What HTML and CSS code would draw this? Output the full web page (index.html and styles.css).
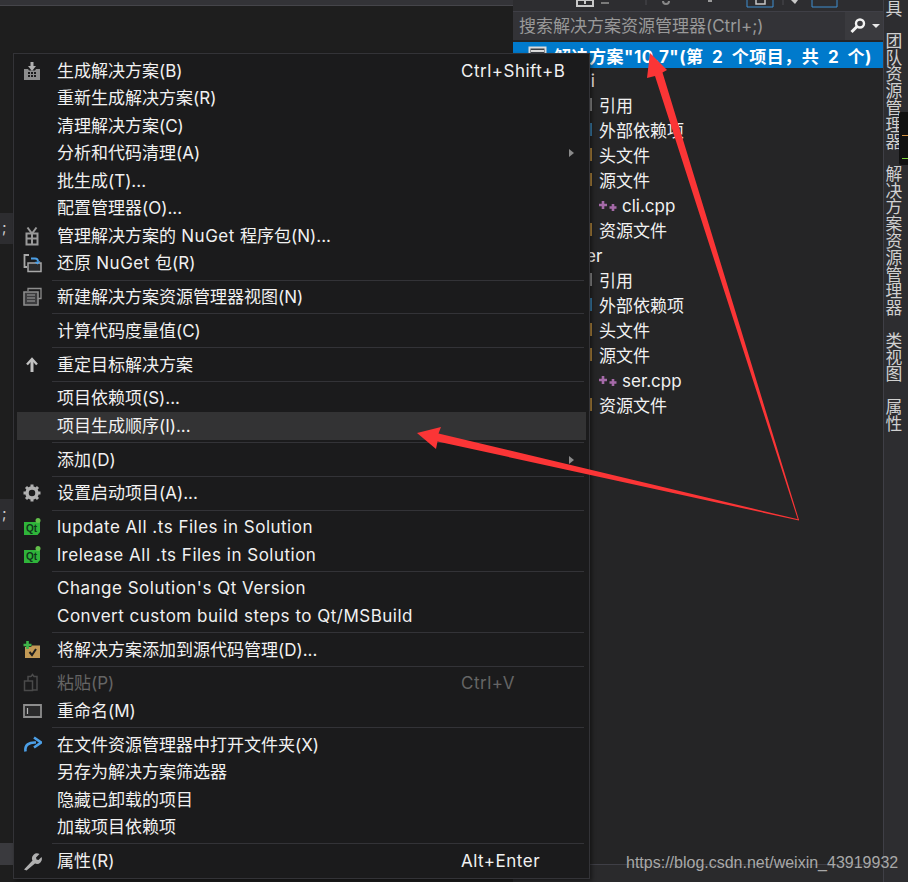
FILE: index.html
```html
<!DOCTYPE html>
<html lang="zh">
<head>
<meta charset="utf-8">
<title>解决方案右键菜单</title>
<link rel="stylesheet" href="styles.css">
</head>
<body>
<div class="app">
  <div class="editor">
    <div class="tabbar"></div>
    <div class="chip chip-a">;</div>
    <div class="chip chip-b">;</div>
    <div class="chip chip-c"></div>
  </div>
  <div class="explorer">
    <div class="toolbar">
      <svg class="toolbar-icons" width="370" height="11" viewBox="0 0 370 11"><path d="M64 0h16v6H64zM72 0v4" fill="none" stroke="#c8c8c8" stroke-width="2"/><path d="M88 3h8" stroke="#7a7a7a" stroke-width="2"/><path d="M133 0v5" stroke="#4a4a4e"/><path d="M150 1a3 3 0 0 0 6 0" fill="none" stroke="#888" stroke-width="2"/><path d="M195 1h4" stroke="#9a9a9a" stroke-width="2"/><path d="M234 -1h26v8h-26z" fill="none" stroke="#3f8fd0"/><path d="M243 -1h9v5h-9z" fill="none" stroke="#c8c8c8" stroke-width="1.500"/><path d="M270 0v5" stroke="#4a4a4e"/><path d="M278 0l4 4 3-4z" fill="#c8c8c8"/><path d="M299 -1h25v8h-25z" fill="none" stroke="#3f8fd0"/></svg>
    </div>
    <div class="search">
      <span class="search-text">搜索解决方案资源管理器(Ctrl+;)</span>
      <span class="search-btn">
        <svg width="18" height="18" viewBox="0 0 18 18"><circle cx="11" cy="6.500" r="4" fill="none" stroke="#f2f2f2" stroke-width="2.400"/><path d="M8 9.500L2.500 15" stroke="#f2f2f2" stroke-width="3"/></svg>
        <svg width="8" height="5" viewBox="0 0 8 5"><path d="M0 0h8L4 4z" fill="#e8e8e8"/></svg>
      </span>
    </div>
    <div class="selected">
      <svg class="sol-icon" width="20" height="18" viewBox="0 0 20 18"><path d="M1.500 1.500h16v15h-16z" fill="#3a3f45" stroke="#dcdcdc" stroke-width="2"/><path d="M3 5h13" stroke="#dcdcdc" stroke-width="2"/></svg>
      <span>解决方案"10.7"(第 2 个项目，共 2 个)</span>
    </div>
    <ul class="tree">
      <li class="t-project">cli</li>
      <li class="t-item"><i class="marker gray"></i>引用</li>
      <li class="t-item"><i class="marker dep"></i>外部依赖项</li>
      <li class="t-item"><i class="marker"></i>头文件</li>
      <li class="t-item"><i class="marker"></i>源文件</li>
      <li class="t-file"><svg class="pp" width="22" height="12" viewBox="0 0 22 12"><path d="M5 1v8M1 5h8M15 4v7M11.500 7.500h7" stroke="#a56aa8" stroke-width="2.600"/></svg>cli.cpp</li>
      <li class="t-item"><i class="marker"></i>资源文件</li>
      <li class="t-project">ser</li>
      <li class="t-item"><i class="marker gray"></i>引用</li>
      <li class="t-item"><i class="marker dep"></i>外部依赖项</li>
      <li class="t-item"><i class="marker"></i>头文件</li>
      <li class="t-item"><i class="marker"></i>源文件</li>
      <li class="t-file"><svg class="pp" width="22" height="12" viewBox="0 0 22 12"><path d="M5 1v8M1 5h8M15 4v7M11.500 7.500h7" stroke="#a56aa8" stroke-width="2.600"/></svg>ser.cpp</li>
      <li class="t-item"><i class="marker"></i>资源文件</li>
    </ul>
  </div>
  <div class="strip">
    <span class="v-tab first">工具</span>
    <span class="v-tab">团队资源管理器</span>
    <span class="v-tab">解决方案资源管理器</span>
    <span class="v-tab">类视图</span>
    <span class="v-tab">属性</span>
  </div>
</div>

<div class="meter"><i class="m-orange"></i><i class="m-green"></i></div>

<div class="menu">
  <div class="row"><span class="ic"><svg width="20" height="20" viewBox="0 0 20 20"><path d="M2 8h4l1 1.500h6L14 8h4v11H2z" fill="#8d8d8d"/><path d="M10 1v6" stroke="#b0b0b0" stroke-width="3"/><path d="M6 5h8l-4 5z" fill="#b0b0b0"/><path d="M6 12h2M9 12h2M12 12h2M6 15h2M9 15h2M12 15h2" stroke="#1b1b1c" stroke-width="2"/></svg></span><span class="lb">生成解决方案(B)</span><span class="sc en">Ctrl+Shift+B</span></div>
  <div class="row"><span class="ic"></span><span class="lb">重新生成解决方案(R)</span></div>
  <div class="row"><span class="ic"></span><span class="lb">清理解决方案(C)</span></div>
  <div class="row"><span class="ic"></span><span class="lb">分析和代码清理(A)</span><span class="sc"><b class="arrow"></b></span></div>
  <div class="row"><span class="ic"></span><span class="lb">批生成(T)...</span></div>
  <div class="row"><span class="ic"></span><span class="lb">配置管理器(O)...</span></div>
  <div class="row"><span class="ic"><svg width="20" height="20" viewBox="0 0 20 20"><path d="M4.500 7.500h11v11h-11zM10 7.500v11M4.500 12.500h11" fill="none" stroke="#9a9a9a" stroke-width="2"/><path d="M5.500 1.500l4.500 6 4.500-6" fill="none" stroke="#9a9a9a" stroke-width="2"/></svg></span><span class="lb">管理解决方案的<span class="en"> NuGet </span>程序包(N)...</span></div>
  <div class="row"><span class="ic"><svg width="20" height="20" viewBox="0 0 20 20"><path d="M7 2H2.500v12H5" fill="none" stroke="#a8a8a8" stroke-width="1.800"/><path d="M6 10h13v8.500H6z" fill="#2b2b2c" stroke="#a8a8a8" stroke-width="1.500"/><path d="M9 5.500h4a3 3 0 0 1 3 3" fill="none" stroke="#4c9fe6" stroke-width="1.800"/><path d="M13 10.500l3 2.500 3-3.500z" fill="#4c9fe6" transform="translate(-.5 -1.500)"/></svg></span><span class="lb">还原<span class="en"> NuGet </span>包(R)</span></div>
  <div class="sep"></div>
  <div class="row"><span class="ic"><svg width="20" height="20" viewBox="0 0 20 20"><path d="M6 4V1.500h13v10h-3" fill="none" stroke="#8d8d8d" stroke-width="1.300"/><path d="M2 5h14v13H2z" fill="#3c3c3e" stroke="#8d8d8d" stroke-width="1.600"/><path d="M5 8h8M5 11h8M5 14h8" stroke="#a0a0a0"/></svg></span><span class="lb">新建解决方案资源管理器视图(N)</span></div>
  <div class="sep"></div>
  <div class="row"><span class="ic"></span><span class="lb">计算代码度量值(C)</span></div>
  <div class="sep"></div>
  <div class="row"><span class="ic"><svg width="20" height="20" viewBox="0 0 20 20"><path d="M10 17V5" stroke="#c2c2c2" stroke-width="3"/><path d="M5 9.500L10 4l5 5.500" fill="none" stroke="#c2c2c2" stroke-width="2.400"/></svg></span><span class="lb">重定目标解决方案</span></div>
  <div class="sep"></div>
  <div class="row"><span class="ic"></span><span class="lb">项目依赖项(S)...</span></div>
  <div class="row hot"><span class="ic"></span><span class="lb">项目生成顺序(I)...</span></div>
  <div class="sep"></div>
  <div class="row"><span class="ic"></span><span class="lb">添加(D)</span><span class="sc"><b class="arrow"></b></span></div>
  <div class="sep"></div>
  <div class="row"><span class="ic"><svg width="20" height="20" viewBox="0 0 20 20"><circle cx="10" cy="10" r="5" fill="none" stroke="#b0b0b0" stroke-width="3.500"/><path d="M10 1.500v3M10 15.500v3M1.500 10h3M15.500 10h3M4 4l2 2M14 14l2 2M16 4l-2 2M6 14l-2 2" stroke="#b0b0b0" stroke-width="3"/></svg></span><span class="lb">设置启动项目(A)...</span></div>
  <div class="sep"></div>
  <div class="row"><span class="ic"><svg width="20" height="20" viewBox="0 0 20 20"><path d="M2 5h13l3-2.500V15l-2.500 3H2z" fill="#2fb53a"/><circle cx="16" cy="3.500" r="2.500" fill="#62c04a"/><text class="qt" x="4" y="14.500">Qt</text></svg></span><span class="lb en">lupdate All .ts Files in Solution</span></div>
  <div class="row"><span class="ic"><svg width="20" height="20" viewBox="0 0 20 20"><path d="M2 5h13l3-2.500V15l-2.500 3H2z" fill="#2fb53a"/><circle cx="16" cy="3.500" r="2.500" fill="#62c04a"/><text class="qt" x="4" y="14.500">Qt</text></svg></span><span class="lb en">lrelease All .ts Files in Solution</span></div>
  <div class="sep"></div>
  <div class="row"><span class="ic"></span><span class="lb en">Change Solution's Qt Version</span></div>
  <div class="row"><span class="ic"></span><span class="lb en">Convert custom build steps to Qt/MSBuild</span></div>
  <div class="sep"></div>
  <div class="row"><span class="ic"><svg width="20" height="20" viewBox="0 0 20 20"><path d="M3 7h6l1 -1.500h8V18H3z" fill="#c39a56"/><path d="M7.500 12l2.500 3 4-6" fill="none" stroke="#1e1e1e" stroke-width="2"/><path d="M5.500 1v8M1.500 5h8" stroke="#3fb54a" stroke-width="2.600"/></svg></span><span class="lb">将解决方案添加到源代码管理(D)...</span></div>
  <div class="sep"></div>
  <div class="row off"><span class="ic"><svg width="20" height="20" viewBox="0 0 20 20"><path d="M2.500 8h8v9.500h-8zM6 8V3.500h3M9 3.500L10.500 1.500 12 3.500h3V17h-4" fill="none" stroke="#4a4a4a" stroke-width="1.500"/></svg></span><span class="lb">粘贴(P)</span><span class="sc en">Ctrl+V</span></div>
  <div class="row"><span class="ic"><svg width="20" height="20" viewBox="0 0 20 20"><path d="M2 4h17v12H2z" fill="#2a2a2b" stroke="#8d8d8d" stroke-width="1.800"/><path d="M5.500 7v6" stroke="#b8b8b8" stroke-width="1.200"/></svg></span><span class="lb">重命名(M)</span></div>
  <div class="sep"></div>
  <div class="row"><span class="ic"><svg width="20" height="20" viewBox="0 0 20 20"><path d="M3.500 16.500C2.500 10 7 7 14 7.500" fill="none" stroke="#4c9fe6" stroke-width="2.600"/><path d="M12 2.500l7 5-7 5" fill="none" stroke="#4c9fe6" stroke-width="2.600"/></svg></span><span class="lb">在文件资源管理器中打开文件夹(X)</span></div>
  <div class="row"><span class="ic"></span><span class="lb">另存为解决方案筛选器</span></div>
  <div class="row"><span class="ic"></span><span class="lb">隐藏已卸载的项目</span></div>
  <div class="row"><span class="ic"></span><span class="lb">加载项目依赖项</span></div>
  <div class="sep"></div>
  <div class="row"><span class="ic"><svg width="20" height="20" viewBox="0 0 20 20"><path d="M2 18.500l8.500-9a5 5 0 0 1 7-6.500L14 6.500l.5 2 2 .5 3-3a5 5 0 0 1-6.500 6.500L4.500 19.500z" fill="#b0b0b0"/></svg></span><span class="lb">属性(R)</span><span class="sc en">Alt+Enter</span></div>
</div>

<svg class="arrows" width="908" height="882" viewBox="0 0 908 882">
  <path d="M650 53L667 70 662.500 72.500 799 520 798 520 655 76 647 78z" fill="#fb3536"/>
  <path d="M417 433L441 427 438.500 433.500 799 519.500 799 520.500 437.500 441.500 436 449z" fill="#fb3536"/>
</svg>
<div class="watermark">https://blog.csdn.net/weixin_43919932</div>
</body>
</html>
```

FILE: styles.css
```css
* { box-sizing: border-box; }
html, body { margin: 0; padding: 0; }
body {
  width: 908px;
  height: 882px;
  overflow: hidden;
  position: relative;
  background: #1e1e1e;
  font-family: "Inter", "Noto Sans CJK SC", sans-serif;
  font-size: 17px;
  color: #f1f1f1;
}
.app { display: flex; width: 908px; height: 882px; }
.en { letter-spacing: .5px; }

.editor { width: 513px; position: relative; background: #1e1e1e; }
.tabbar { height: 6px; background: #333337; border-bottom: 1px solid #45454a; }
.chip {
  position: absolute;
  left: 0;
  width: 13px;
  background: #2d2d30;
  color: #d0d0d0;
  font-size: 15px;
  line-height: 30px;
  padding-left: 2px;
}
.chip-a { top: 213px; height: 31px; }
.chip-b { top: 499px; height: 31px; }
.chip-c { top: 843px; height: 22px; background: #3a3a3e; }

.explorer {
  width: 370px;
  display: flex;
  flex-direction: column;
  background: #252526;
  border-bottom: 17px solid #2a2a2c;
  position: relative;
}
.explorer::after {
  content: "";
  position: absolute;
  left: 0;
  right: 0;
  bottom: 0;
  height: 1px;
  background: #3f3f46;
}
.toolbar { height: 11px; background: #2d2d30; }
.toolbar-icons { display: block; }
.search {
  height: 29px;
  display: flex;
  align-items: stretch;
  background: #333337;
  border-top: 1px solid #3f3f46;
  color: #999;
  line-height: 28px;
}
.search-text { flex: 1; padding-left: 6px; }
.search-btn {
  width: 38px;
  display: flex;
  align-items: center;
  gap: 5px;
  padding-left: 4px;
  background: #3a3a3e;
}
.selected {
  height: 26px;
  margin-top: 2px;
  display: flex;
  align-items: center;
  background: #007acc;
  color: #fff;
  font-weight: 700;
  white-space: pre;
  padding-left: 15px;
  gap: 6px;
  letter-spacing: .5px;
  word-spacing: 4px;
}
.sol-icon { flex: none; }

.tree { list-style: none; margin: 0; padding: 0; }
.tree li { height: 25px; padding-top: 1px; line-height: 24px; position: relative; white-space: nowrap; }
.t-project { padding-left: 64px; }
.t-item { padding-left: 86px; }
.t-file { padding-left: 109px; }
.marker {
  position: absolute;
  left: 64px;
  top: 5px;
  width: 15px;
  height: 13px;
  background: #b0853d;
}
.marker.gray { background: #8a8a8a; }
.marker.dep { background: #3a7ca8; }
.pp { position: absolute; left: 85px; top: 7px; }

.strip {
  width: 25px;
  height: 882px;
  background: #2d2d30;
  border-left: 1px solid #3f3f46;
  padding-right: 6px;
  display: flex;
  flex-direction: column;
  align-items: center;
  gap: 15.5px;
  color: #d0d0d0;
  overflow: hidden;
}
.v-tab { writing-mode: vertical-rl; font-size: 16.8px; line-height: 20px; flex: none; }
.v-tab.first { margin-top: -17px; }

.meter {
  position: absolute;
  left: 899px;
  top: 112px;
  width: 9px;
  height: 53px;
  background: #111;
  border-radius: 2px 0 0 2px;
}
.m-orange, .m-green { position: absolute; left: 3px; right: 0; height: 1px; }
.m-orange { top: 23px; background: #d09040; }
.m-green { top: 46px; background: #7ccf3a; }

.menu {
  position: absolute;
  left: 13px;
  top: 53px;
  width: 577px;
  padding: 3px;
  background: #1b1b1c;
  border: 1px solid #333337;
  box-shadow: 2px 2px 4px rgba(0, 0, 0, .45);
}
.row {
  height: 27.5px;
  line-height: 26px;
  display: grid;
  grid-template-columns: 40px 1fr 125px;
  align-items: center;
  white-space: nowrap;
}
.row.hot { background: #333334; }
.row.off { color: #656565; }
.ic { display: flex; align-items: center; padding-left: 5px; height: 27px; }
.lb { grid-column: 2; }
.sc { grid-column: 3; display: flex; align-items: center; height: 27px; }
.arrow {
  margin-left: 108px;
  width: 0;
  height: 0;
  border-left: 5px solid #8a8a8a;
  border-top: 4px solid transparent;
  border-bottom: 4px solid transparent;
}
.sep { height: 6.25px; padding-top: 2.5px; margin: 0 0 0 35px; padding-right: 2px; }
.sep::before { content: ""; display: block; height: 1px; background: #333337; }
.qt { font-family: "Liberation Sans", sans-serif; font-size: 10px; font-weight: 700; fill: #10361a; }

.arrows { position: absolute; left: 0; top: 0; pointer-events: none; }
.watermark {
  position: absolute;
  left: 626px;
  top: 853px;
  font-family: "Liberation Sans", Arial, sans-serif;
  font-size: 16px;
  line-height: 20px;
  color: #a8a8a8;
  white-space: nowrap;
}
```
